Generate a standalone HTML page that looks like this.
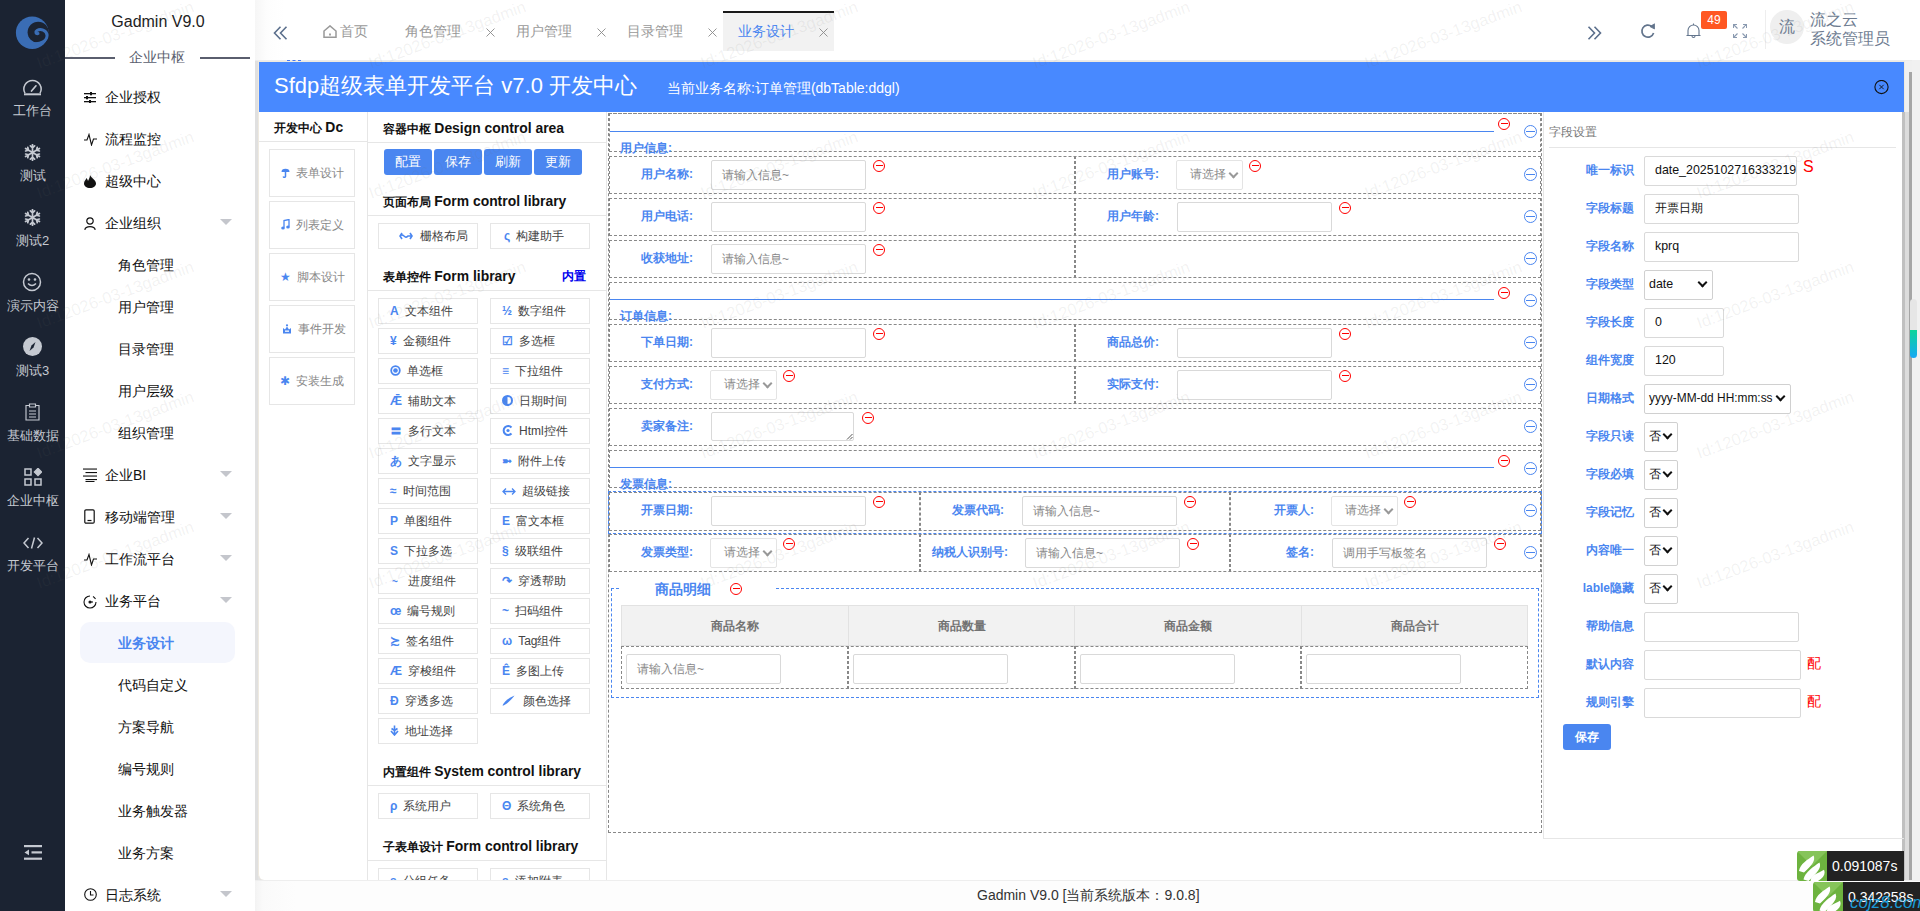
<!DOCTYPE html>
<html><head><meta charset="utf-8">
<style>
*{box-sizing:border-box;margin:0;padding:0}
html,body{width:1920px;height:911px;overflow:hidden;background:#fff;font-family:"Liberation Sans",sans-serif;position:relative}
.a{position:absolute}
#nav{left:0;top:0;width:65px;height:911px;background:#1b2332}
.ni{position:absolute;left:0;width:65px;text-align:center;color:#c5c9d1;font-size:13px;line-height:14px}
#menu{left:65px;top:0;width:190px;height:911px;background:#fff}
.mi{position:absolute;left:40px;font-size:14px;color:#111;line-height:16px;white-space:nowrap}
.ms{position:absolute;left:53px;font-size:14px;color:#111;line-height:16px;white-space:nowrap}
.arr{position:absolute;left:155px;width:0;height:0;border-left:6px solid transparent;border-right:6px solid transparent;border-top:6px solid #c4c6cc}
.tab{font-size:14px;line-height:16px;color:#999;white-space:nowrap}
.tabx{font-size:16px;line-height:18px;color:#777}
.hd{position:absolute;font-size:12px;font-weight:bold;color:#111;line-height:16px;white-space:nowrap}
.hd b{font-size:13.9px}
.hl{position:absolute;height:1px;background:#e6e6e6}
.dbox{position:absolute;left:269px;width:86px;height:48px;border:1px solid #e6e6e6;font-size:12px;color:#888;line-height:14px;white-space:nowrap}
.dbox i{font-style:normal;color:#4a86f0;display:inline-block;margin-right:6px}
.btn{position:absolute;top:149px;width:48px;height:26px;background:#4a86f0;color:#fff;font-size:13px;line-height:26px;text-align:center;border-radius:3px}
.cb{position:absolute;width:100px;height:26px;border:1px solid #e6e6e6;font-size:12px;color:#444;line-height:24px;padding-left:11px;white-space:nowrap}
.cb i{font-style:normal;color:#4a86f0;display:inline-block;margin-right:6px;font-weight:bold}
.row{position:absolute;left:609px;width:932px;border:1px dashed #888}
.vd{position:absolute;width:2px;border-left:1px dashed #888;border-right:1px dashed #888}
.lb{position:absolute;font-size:12px;font-weight:bold;color:#4a86f0;line-height:14px;white-space:nowrap}
.ti{position:absolute;font-size:12px;font-weight:bold;color:#4a86f0;line-height:14px;white-space:nowrap}
.inp{position:absolute;height:30px;border:1px solid #d9d9d9;border-radius:2px;background:#fff;font-size:12px;color:#888;line-height:28px;padding-left:10px;white-space:nowrap}
.sel{position:absolute;width:66px;height:29px;border:1px solid #e4e4e4;border-radius:2px;background:#fff;font-size:12px;color:#8a8a8a;line-height:27px;padding-left:13px;white-space:nowrap}
.rm{position:absolute;width:12px;height:12px;border:1.3px solid #f00;border-radius:50%}
.rm:after{content:"";position:absolute;left:1.5px;right:1.5px;top:4.2px;height:1.3px;background:#f00}
.bm{position:absolute;left:1524px;width:13px;height:13px;border:1.2px solid #4a86f0;border-radius:50%}
.bm:after{content:"";position:absolute;left:1px;right:1px;top:4.8px;height:1.2px;background:#4a86f0}
.rl{position:absolute;font-size:12px;font-weight:bold;color:#4a86f0;line-height:14px;white-space:nowrap;text-align:right;width:80px;left:1554px}
.ri{position:absolute;left:1644px;height:30px;border:1px solid #d9d9d9;border-radius:2px;font-size:12.4px;color:#111;line-height:27px;padding-left:10px;white-space:nowrap;overflow:hidden;background:#fff}
.rs{position:absolute;left:1644px;height:30px;border:1px solid #d0d0d0;border-radius:2px;font-size:12.4px;color:#111;line-height:27px;padding-left:4px;white-space:nowrap;background:#fff}
.chev{position:absolute;width:7px;height:7px;border-right:2px solid #111;border-bottom:2px solid #111;transform:rotate(45deg)}
</style></head><body>
<div id="nav" class="a">
  <svg class="a" style="left:10px;top:10px" width="45" height="45" viewBox="0 0 45 45">
<defs><mask id="lm"><rect width="45" height="45" fill="#fff"/><circle cx="28.2" cy="22.3" r="10.6" fill="#000"/></mask></defs>
<circle cx="22.2" cy="22.7" r="16.3" fill="#3a6db5" mask="url(#lm)"/>
<path d="M22 33.5 C31 35 37.5 30.5 37 25 C36.5 20 30.5 18.5 27 20.5 C25 21.8 25.8 24 28 23.6" fill="none" stroke="#3a6db5" stroke-width="3" stroke-linecap="round"/>
</svg>
  <!-- gauge -->
  <svg class="a" style="left:23px;top:79px" width="19" height="17" viewBox="0 0 19 17" fill="none" stroke="#c5c9d1" stroke-width="1.5">
    <path d="M2 14.2 A8.6 8.6 0 1 1 17 14.2"/><path d="M1 15.3 H18" stroke-width="2"/><path d="M8.5 12 L13 6.8" stroke-width="1.7" stroke-linecap="round"/>
  </svg>
  <div class="ni" style="top:104px">工作台</div>
  <svg class="a" style="left:24px;top:144px" width="17" height="17" viewBox="0 0 17 17" fill="none" stroke="#c5c9d1" stroke-width="1.7" stroke-linecap="round"><path d="M8.5 8.5 L8.50 0.50 M8.50 3.90 L10.62 1.78 M8.50 3.90 L6.38 1.78 M8.5 8.5 L1.57 4.50 M4.52 6.20 L3.74 3.30 M4.52 6.20 L1.62 6.98 M8.5 8.5 L1.57 12.50 M4.52 10.80 L1.62 10.02 M4.52 10.80 L3.74 13.70 M8.5 8.5 L8.50 16.50 M8.50 13.10 L6.38 15.22 M8.50 13.10 L10.62 15.22 M8.5 8.5 L15.43 12.50 M12.48 10.80 L13.26 13.70 M12.48 10.80 L15.38 10.02 M8.5 8.5 L15.43 4.50 M12.48 6.20 L15.38 6.98 M12.48 6.20 L13.26 3.30"/></svg>
  <div class="ni" style="top:169px">测试</div>
  <svg class="a" style="left:24px;top:209px" width="17" height="17" viewBox="0 0 17 17" fill="none" stroke="#c5c9d1" stroke-width="1.7" stroke-linecap="round"><path d="M8.5 8.5 L8.50 0.50 M8.50 3.90 L10.62 1.78 M8.50 3.90 L6.38 1.78 M8.5 8.5 L1.57 4.50 M4.52 6.20 L3.74 3.30 M4.52 6.20 L1.62 6.98 M8.5 8.5 L1.57 12.50 M4.52 10.80 L1.62 10.02 M4.52 10.80 L3.74 13.70 M8.5 8.5 L8.50 16.50 M8.50 13.10 L6.38 15.22 M8.50 13.10 L10.62 15.22 M8.5 8.5 L15.43 12.50 M12.48 10.80 L13.26 13.70 M12.48 10.80 L15.38 10.02 M8.5 8.5 L15.43 4.50 M12.48 6.20 L15.38 6.98 M12.48 6.20 L13.26 3.30"/></svg>
  <div class="ni" style="top:234px">测试2</div>
  <svg class="a" style="left:22px;top:272px" width="20" height="20" viewBox="0 0 20 20" fill="none" stroke="#c5c9d1" stroke-width="1.5">
    <circle cx="10" cy="10" r="8.5"/><path d="M6 11.5 Q10 15.5 14 11.5"/><circle cx="7" cy="7.5" r=".6" fill="#c5c9d1"/><circle cx="13" cy="7.5" r=".6" fill="#c5c9d1"/>
  </svg>
  <div class="ni" style="top:299px">演示内容</div>
  <svg class="a" style="left:23px;top:337px" width="19" height="19" viewBox="0 0 19 19">
    <circle cx="9.5" cy="9.5" r="9.5" fill="#c5c9d1"/><path d="M12.5 5 L10.5 10.5 L6.5 14 L8.5 8.5Z" fill="#1b2332"/>
  </svg>
  <div class="ni" style="top:364px">测试3</div>
  <svg class="a" style="left:25px;top:403px" width="15" height="18" viewBox="0 0 15 18" fill="none" stroke="#c5c9d1" stroke-width="1.15">
    <path d="M4.5 2.5 H1 V17 H14 V2.5 H10.5"/><path d="M4.5 1 H10.5 V4 H4.5Z"/><path d="M4 8 H11 M4 11 H11 M4 14 H11"/>
  </svg>
  <div class="ni" style="top:429px">基础数据</div>
  <svg class="a" style="left:24px;top:468px" width="18" height="18" viewBox="0 0 18 18" fill="none" stroke="#c5c9d1" stroke-width="1.5">
    <rect x="1" y="1" width="6" height="6"/><rect x="1" y="11" width="6" height="6"/><rect x="11" y="11" width="6" height="6"/><path d="M14 0.5 L17.5 4 L14 7.5 L10.5 4Z" fill="#c5c9d1"/>
  </svg>
  <div class="ni" style="top:494px">企业中枢</div>
  <svg class="a" style="left:23px;top:537px" width="20" height="12" viewBox="0 0 20 12" fill="none" stroke="#c5c9d1" stroke-width="1.5"><path d="M5.5 1 L1 6 L5.5 11 M14.5 1 L19 6 L14.5 11 M11.5 0.5 L8.5 11.5"/></svg>
  <div class="ni" style="top:559px">开发平台</div>
  <svg class="a" style="left:23.5px;top:845px" width="18" height="15" viewBox="0 0 18 15" fill="#c5c9d1">
    <rect x="0" y="0" width="18" height="2.2"/><rect x="7.5" y="6.3" width="10.5" height="2.2"/><rect x="0" y="12.6" width="18" height="2.2"/><path d="M0.5 7.4 L5 4.5 V10.3Z"/>
  </svg>
</div>

<div id="menu" class="a">
  <div class="a" style="left:-2px;width:190px;top:12px;text-align:center;font-size:16px;line-height:20px;color:#222">Gadmin V9.0</div>
  <div class="a" style="left:0;top:57px;width:50px;height:1.5px;background:#5a5e6e"></div>
  <div class="a" style="left:135px;top:57px;width:50px;height:1.5px;background:#5a5e6e"></div>
  <div class="a" style="left:64px;top:49px;font-size:14px;line-height:16px;color:#5a5e6e">企业中枢</div>

  <svg class="a" style="left:19px;top:92px" width="12" height="11" viewBox="0 0 12 11" fill="#111"><rect x="0" y="1" width="12" height="1.3"/><rect x="0" y="5" width="12" height="1.3"/><rect x="0" y="9" width="12" height="1.3"/><rect x="6" y="0" width="2" height="3.3"/><rect x="2" y="4" width="2" height="3.3"/><rect x="5" y="8" width="2" height="3.3"/></svg>
  <div class="mi" style="top:89px">企业授权</div>
  <svg class="a" style="left:19px;top:133px" width="13" height="13" viewBox="0 0 13 13" fill="none" stroke="#111" stroke-width="1.1"><path d="M0 7 H3 L5 1.5 L7.5 12 L9.5 6 H13"/></svg>
  <div class="mi" style="top:131px">流程监控</div>
  <svg class="a" style="left:19px;top:175px" width="12" height="13" viewBox="0 0 12 13" fill="#111"><path d="M6 0 C7 3 12 5 12 8.5 C12 11 9.5 13 6 13 C2.5 13 0 11 0 8.5 C0 6 2 4.5 2.5 3 C3.5 4.5 4 5.5 4 6 C5 4 6 2 6 0Z"/></svg>
  <div class="mi" style="top:173px">超级中心</div>
  <svg class="a" style="left:19px;top:217px" width="12" height="13" viewBox="0 0 12 13" fill="none" stroke="#111" stroke-width="1.2"><circle cx="6" cy="4" r="3.2"/><path d="M0.8 12.8 C1.5 8.5 10.5 8.5 11.2 12.8"/></svg>
  <div class="mi" style="top:215px">企业组织</div>
  <div class="arr" style="top:219px"></div>
  <div class="ms" style="top:257px">角色管理</div>
  <div class="ms" style="top:299px">用户管理</div>
  <div class="ms" style="top:341px">目录管理</div>
  <div class="ms" style="top:383px">用户层级</div>
  <div class="ms" style="top:425px">组织管理</div>
  <svg class="a" style="left:18px;top:468px" width="14" height="14" viewBox="0 0 14 14" fill="#111"><rect x="0" y="0.5" width="14" height="1.1"/><rect x="2.5" y="4" width="11.5" height="1.1"/><rect x="0" y="7.5" width="14" height="1.1"/><rect x="2.5" y="11" width="11.5" height="1.1"/><rect x="2.5" y="13" width="9" height="1"/></svg>
  <div class="mi" style="top:467px">企业BI</div>
  <div class="arr" style="top:471px"></div>
  <svg class="a" style="left:19px;top:509px" width="11" height="15" viewBox="0 0 11 15" fill="none" stroke="#111" stroke-width="1.2"><rect x="0.8" y="0.8" width="9.4" height="13.4" rx="1.2"/><path d="M3.5 11.5 H7.5"/></svg>
  <div class="mi" style="top:509px">移动端管理</div>
  <div class="arr" style="top:513px"></div>
  <svg class="a" style="left:19px;top:553px" width="13" height="13" viewBox="0 0 13 13" fill="none" stroke="#111" stroke-width="1.1"><path d="M0 7 H3 L5 1.5 L7.5 12 L9.5 6 H13"/></svg>
  <div class="mi" style="top:551px">工作流平台</div>
  <div class="arr" style="top:555px"></div>
  <svg class="a" style="left:18px;top:595px" width="14" height="14" viewBox="0 0 14 14" fill="none" stroke="#111" stroke-width="1.1"><path d="M7 1 A6 6 0 1 0 13 7" /><path d="M10 1.5 A6 6 0 0 1 12.5 4"/><circle cx="7" cy="7" r="1" fill="#111"/><path d="M7 7 H10"/></svg>
  <div class="mi" style="top:593px">业务平台</div>
  <div class="arr" style="top:597px"></div>
  <div class="a" style="left:15px;top:622px;width:155px;height:41px;border-radius:10px;background:#f4f6fd"></div>
  <div class="ms" style="top:635px;color:#4a86f0;font-weight:bold">业务设计</div>
  <div class="ms" style="top:677px">代码自定义</div>
  <div class="ms" style="top:719px">方案导航</div>
  <div class="ms" style="top:761px">编号规则</div>
  <div class="ms" style="top:803px">业务触发器</div>
  <div class="ms" style="top:845px">业务方案</div>
  <svg class="a" style="left:19px;top:888px" width="13" height="13" viewBox="0 0 13 13" fill="none" stroke="#111" stroke-width="1.1"><circle cx="6.5" cy="6.5" r="5.8"/><path d="M6.5 3 V7 H9.5"/></svg>
  <div class="mi" style="top:887px">日志系统</div>
  <div class="arr" style="top:891px"></div>
</div>

<!-- top bar -->
<div class="a" style="left:255px;top:0;width:1665px;height:60px;background:linear-gradient(90deg,#f6f6f6,#fdfdfd 12px,#fff 30px)"></div>
<svg class="a" style="left:273px;top:26px" width="15" height="14" viewBox="0 0 15 14" fill="none" stroke="#5b6f8c" stroke-width="1.6"><path d="M7.5 0.8 L1.5 7 L7.5 13.2 M13.5 0.8 L7.5 7 L13.5 13.2"/></svg>
<svg class="a" style="left:323px;top:25px" width="14" height="13" viewBox="0 0 14 13" fill="none" stroke="#999" stroke-width="1.5"><path d="M1 6 L7 0.9 L13 6 V12.2 H1Z"/><path d="M7 8.5 V10.5" stroke-width="1.8"/></svg>
<div class="a tab" style="left:340px;top:23px">首页</div>
<div class="a tab" style="left:405px;top:23px">角色管理</div>
<svg class="a" style="left:486px;top:28px" width="9" height="9" viewBox="0 0 9 9" stroke="#8a8a8a" stroke-width="0.9"><path d="M0.5 0.5 L8.5 8.5 M8.5 0.5 L0.5 8.5"/></svg>
<div class="a tab" style="left:516px;top:23px">用户管理</div>
<svg class="a" style="left:597px;top:28px" width="9" height="9" viewBox="0 0 9 9" stroke="#8a8a8a" stroke-width="0.9"><path d="M0.5 0.5 L8.5 8.5 M8.5 0.5 L0.5 8.5"/></svg>
<div class="a tab" style="left:627px;top:23px">目录管理</div>
<svg class="a" style="left:708px;top:28px" width="9" height="9" viewBox="0 0 9 9" stroke="#8a8a8a" stroke-width="0.9"><path d="M0.5 0.5 L8.5 8.5 M8.5 0.5 L0.5 8.5"/></svg>
<div class="a" style="left:723px;top:11px;width:111px;height:40px;background:#f2f2f2;border-top:2px solid #1a1a1a"></div>
<div class="a tab" style="left:738px;top:23px;color:#4a86f0">业务设计</div>
<svg class="a" style="left:819px;top:28px" width="9" height="9" viewBox="0 0 9 9" stroke="#8a8a8a" stroke-width="0.9"><path d="M0.5 0.5 L8.5 8.5 M8.5 0.5 L0.5 8.5"/></svg>
<svg class="a" style="left:1587px;top:26px" width="15" height="14" viewBox="0 0 15 14" fill="none" stroke="#5b6f8c" stroke-width="1.6"><path d="M1.5 0.8 L7.5 7 L1.5 13.2 M7.5 0.8 L13.5 7 L7.5 13.2"/></svg>
<svg class="a" style="left:1640px;top:23px" width="16" height="16" viewBox="0 0 16 16" fill="none" stroke="#62748c" stroke-width="1.7"><path d="M13.6 10 A6 6 0 1 1 11.8 3.6"/><path d="M10 3.6 L14.5 0.8 L14.5 6Z" fill="#62748c" stroke-width="0.8"/></svg>
<svg class="a" style="left:1686px;top:23px" width="15" height="16" viewBox="0 0 15 16" fill="none" stroke="#62748c" stroke-width="1.1"><path d="M7.5 0.5 V2"/><path d="M2 12.5 V7.5 A5.5 5.5 0 0 1 13 7.5 V12.5 H14.5 H0.5Z"/><path d="M6 13 A1.5 1.5 0 0 0 9 13"/></svg>
<div class="a" style="left:1701px;top:11px;width:26px;height:18px;background:#ff5722;border-radius:2px;color:#fff;font-size:12px;line-height:18px;text-align:center">49</div>
<svg class="a" style="left:1733px;top:24px" width="14" height="14" viewBox="0 0 14 14" fill="none" stroke="#8a9ab0" stroke-width="1.1"><path d="M0.5 4 V0.5 H4 M0.5 0.5 L4.5 4.5 M10 0.5 H13.5 V4 M13.5 0.5 L9.5 4.5 M0.5 10 V13.5 H4 M0.5 13.5 L4.5 9.5 M13.5 10 V13.5 H10 M13.5 13.5 L9.5 9.5"/></svg>
<div class="a" style="left:1765px;top:10px;width:1px;height:39px;background:#eee"></div>
<div class="a" style="left:1770px;top:10px;width:34px;height:34px;border-radius:50%;background:#efefef;color:#6d7b90;font-size:16px;line-height:34px;text-align:center">流</div>
<div class="a" style="left:1810px;top:10px;font-size:16px;line-height:19px;color:#6d7b90">流之云<br>系统管理员</div>

<!-- content frame -->
<div class="a" style="left:255px;top:60px;width:1665px;height:820px;background:#f0f0f0"></div>
<div class="a" style="left:255px;top:61px;width:3px;height:819px;background:#e0e0e0"></div><div class="a" style="left:258px;top:870px;width:8px;height:11px;background:#e4e4e4"></div>
<div class="a" style="left:255px;top:60px;width:1665px;height:1px;background:#ececec"></div><div class="a" style="left:258px;top:61px;width:1646px;height:819px;background:#fff;border-left:1px solid #efeae0;border-top:1px solid #efeae0;border-bottom-left-radius:6px"></div>
<div class="a" style="left:287px;top:60px;width:14px;height:1px;border-top:1px dashed #4a7af0"></div>
<div class="a" style="left:259px;top:62px;width:1645px;height:50px;background:#4889ff"></div>
<div class="a" style="left:274px;top:72px;font-size:22px;line-height:28px;color:#fff">Sfdp超级表单开发平台 v7.0 开发中心</div>
<div class="a" style="left:667px;top:80px;font-size:14px;line-height:17px;color:#fff">当前业务名称:订单管理(dbTable:ddgl)</div>
<svg class="a" style="left:1874px;top:80px" width="15" height="15" viewBox="0 0 15 15" fill="none" stroke="#111" stroke-width="1.1"><circle cx="7.5" cy="7" r="6.6"/><path d="M5.3 4.8 L9.7 9.2 M9.7 4.8 L5.3 9.2" stroke-width="0.9"/></svg>
<!-- right scrollbars -->
<div class="a" style="left:1904px;top:61px;width:1px;height:51px;background:#efeae0"></div><div class="a" style="left:1905px;top:112px;width:4px;height:768px;background:#dcdcdc"></div><div class="a" style="left:1902px;top:112px;width:3px;height:768px;background:#c0c0c0"></div><div class="a" style="left:1909px;top:72px;width:3px;height:808px;background:#a6a6a6"></div>
<div class="a" style="left:1912px;top:60px;width:8px;height:820px;background:#f1f1f1"></div>
<div class="a" style="left:1910px;top:299px;width:7px;height:32px;border-radius:4px 4px 0 0;background:#e6e6e6"></div><div class="a" style="left:1910px;top:330px;width:7px;height:28px;border-radius:0 0 4px 4px;background:linear-gradient(#0bd59a,#17a8f5)"></div>
<!-- footer -->
<div class="a" style="left:255px;top:880px;width:1665px;height:31px;background:linear-gradient(90deg,#f3f3f3,#fafafa 8px,#fdfdfd 40px);border-top:1px solid #eee"></div>
<div class="a" style="left:977px;top:887px;font-size:14px;line-height:17px;color:#333">Gadmin V9.0 [当前系统版本：9.0.8]</div>

<div class="hd" style="left:274px;top:119px">开发中心 <b>Dc</b></div>
<div class="hl" style="left:259px;top:141px;width:108px"></div>
<div class="a" style="left:367px;top:112px;width:1px;height:768px;background:#e6e6e6"></div>
<div class="dbox" style="top:149px;padding:16px 0 0 10px"><i><svg width="9" height="10" viewBox="0 0 9 10" style="vertical-align:-1px;margin-left:1px"><path d="M0.5 4 A4 3.2 0 0 1 8.5 4Z" fill="#4a86f0"/><path d="M4.5 3.5 V8.5 A1.2 1.2 0 0 1 2.2 8.5" fill="none" stroke="#4a86f0" stroke-width="1.5"/></svg></i>表单设计</div>
<div class="dbox" style="top:201px;padding:16px 0 0 10px"><i><svg width="9" height="11" viewBox="0 0 9 11" style="vertical-align:-1px;margin-left:1px"><path d="M3 8.5 V1.5 L8 0.5 V7.5" fill="none" stroke="#4a86f0" stroke-width="1.3"/><ellipse cx="2" cy="9" rx="1.8" ry="1.5" fill="#4a86f0"/><ellipse cx="7" cy="8" rx="1.8" ry="1.5" fill="#4a86f0"/></svg></i>列表定义</div>
<div class="dbox" style="top:253px;padding:16px 0 0 10px"><i>★</i>脚本设计</div>
<div class="dbox" style="top:305px;padding:16px 0 0 10px"><i><svg width="10" height="10" viewBox="0 0 10 10" style="vertical-align:-1px;margin-left:2px"><path d="M1 9.5 V4 L3 5.5 L5 2.5 L7 5.5 L9 4 V9.5Z" fill="#4a86f0"/><circle cx="5" cy="1.3" r="1.1" fill="#4a86f0"/><rect x="3" y="6.5" width="4" height="1.3" fill="#fff"/></svg></i>事件开发</div>
<div class="dbox" style="top:357px;padding:16px 0 0 10px"><i>✱</i>安装生成</div>
<div class="hd" style="left:383px;top:120px">容器中枢 <b>Design control area</b></div>
<div class="hl" style="left:368px;top:142px;width:238px"></div>
<div class="btn" style="left:384px">配置</div>
<div class="btn" style="left:434px">保存</div>
<div class="btn" style="left:484px">刷新</div>
<div class="btn" style="left:534px">更新</div>
<div class="hd" style="left:383px;top:193px">页面布局 <b>Form control library</b></div>
<div class="hl" style="left:368px;top:215px;width:238px"></div>
<div class="cb" style="left:378px;top:223px;padding-left:20px"><i style="display:inline-block;width:14px;margin-right:7px"><svg width="14" height="8" viewBox="0 0 14 8" fill="none" stroke="#4a86f0" stroke-width="1.6"><path d="M3 1 L1 4 L3 7 M11 1 L13 4 L11 7 M1 4 C4 0 6 8 9 4 L13 4"/></svg></i>栅格布局</div>
<div class="cb" style="left:490px;top:223px;padding-left:13px"><i>ς</i>构建助手</div>
<div class="hd" style="left:383px;top:268px">表单控件 <b>Form library</b></div>
<div class="a" style="left:562px;top:268px;font-size:12px;font-weight:bold;color:#0000ee;line-height:16px">内置</div>
<div class="hl" style="left:368px;top:290px;width:238px"></div>
<div class="cb" style="left:378px;top:298px"><i>A</i>文本组件</div>
<div class="cb" style="left:490px;top:298px"><i>½</i>数字组件</div>
<div class="cb" style="left:378px;top:328px"><i>¥</i>金额组件</div>
<div class="cb" style="left:490px;top:328px"><i>☑</i>多选框</div>
<div class="cb" style="left:378px;top:358px"><i><svg width="11" height="11" viewBox="0 0 11 11" style="vertical-align:-1px"><circle cx="5.5" cy="5.5" r="4.3" fill="none" stroke="#4a86f0" stroke-width="1.8"/><circle cx="5.5" cy="5.5" r="2.3" fill="#4a86f0"/></svg></i>单选框</div>
<div class="cb" style="left:490px;top:358px"><i>≡</i>下拉组件</div>
<div class="cb" style="left:378px;top:388px"><i>Ǣ</i>辅助文本</div>
<div class="cb" style="left:490px;top:388px"><i><svg width="11" height="11" viewBox="0 0 11 11" style="vertical-align:-1px"><circle cx="5.5" cy="5.5" r="4.5" fill="none" stroke="#4a86f0" stroke-width="2"/><path d="M5.5 1 A4.5 4.5 0 0 0 5.5 10Z" fill="#4a86f0"/></svg></i>日期时间</div>
<div class="cb" style="left:378px;top:418px"><i>〓</i>多行文本</div>
<div class="cb" style="left:490px;top:418px"><i><svg width="11" height="11" viewBox="0 0 11 11" style="vertical-align:-1px"><path d="M9.5 2.5 A4.5 4.5 0 1 0 9.5 8.5" fill="none" stroke="#4a86f0" stroke-width="2"/><circle cx="6" cy="5.5" r="1.6" fill="#4a86f0"/></svg></i>Html控件</div>
<div class="cb" style="left:378px;top:448px"><i>あ</i>文字显示</div>
<div class="cb" style="left:490px;top:448px"><i>➼</i>附件上传</div>
<div class="cb" style="left:378px;top:478px"><i>≈</i>时间范围</div>
<div class="cb" style="left:490px;top:478px"><i><svg width="14" height="9" viewBox="0 0 14 9" style="vertical-align:-1px"><path d="M1 4.5 H13 M4 1.5 L1 4.5 L4 7.5 M10 1.5 L13 4.5 L10 7.5" fill="none" stroke="#4a86f0" stroke-width="1.3"/></svg></i>超级链接</div>
<div class="cb" style="left:378px;top:508px"><i>P</i>单图组件</div>
<div class="cb" style="left:490px;top:508px"><i>E</i>富文本框</div>
<div class="cb" style="left:378px;top:538px"><i>S</i>下拉多选</div>
<div class="cb" style="left:490px;top:538px"><i>§</i>级联组件</div>
<div class="cb" style="left:378px;top:568px"><i><span style="font-size:10px;margin-left:2px;margin-right:4px">~</span></i>进度组件</div>
<div class="cb" style="left:490px;top:568px"><i>↷</i>穿透帮助</div>
<div class="cb" style="left:378px;top:598px"><i>œ</i>编号规则</div>
<div class="cb" style="left:490px;top:598px"><i>~</i>扫码组件</div>
<div class="cb" style="left:378px;top:628px"><i>≿</i>签名组件</div>
<div class="cb" style="left:490px;top:628px"><i>ω</i>Tag组件</div>
<div class="cb" style="left:378px;top:658px"><i>Æ</i>穿梭组件</div>
<div class="cb" style="left:490px;top:658px"><i>Ê</i>多图上传</div>
<div class="cb" style="left:378px;top:688px"><i>Đ</i>穿透多选</div>
<div class="cb" style="left:490px;top:688px"><i><svg width="13" height="11" viewBox="0 0 13 11" style="vertical-align:-1px;margin-right:2px"><path d="M0.5 10.5 C2 7 6 3 12.5 0.5 C10 4 6 8 1.5 10.5Z" fill="#4a86f0"/></svg></i>颜色选择</div>
<div class="cb" style="left:378px;top:718px"><i><svg width="9" height="11" viewBox="0 0 9 11" style="vertical-align:-1px"><path d="M4.5 0.5 V9.5 M1 6 L4.5 10 L8 6 M1.5 3.5 L4.5 5.5 L7.5 3.5" fill="none" stroke="#4a86f0" stroke-width="1.6"/></svg></i>地址选择</div>
<div class="hd" style="left:383px;top:763px">内置组件 <b>System control library</b></div>
<div class="hl" style="left:368px;top:785px;width:238px"></div>
<div class="cb" style="left:378px;top:793px"><i>ρ</i>系统用户</div>
<div class="cb" style="left:490px;top:793px"><i>Θ</i>系统角色</div>
<div class="hd" style="left:383px;top:838px">子表单设计 <b>Form control library</b></div>
<div class="hl" style="left:368px;top:860px;width:238px"></div>
<div class="a" style="left:368px;top:861px;width:238px;height:19px;overflow:hidden"><div class="cb" style="left:10px;top:7px"><i>ʂ</i>分组任务</div><div class="cb" style="left:122px;top:7px"><i>ʂ</i>添加附表</div></div>
<div class="a" style="left:606px;top:112px;width:1px;height:768px;background:#e6e6e6"></div>
<div class="a" style="left:608px;top:113px;width:934px;height:720px;border:1px dashed #888"></div>
<div class="row" style="top:113px;height:39px"></div>
<div class="a" style="left:610px;top:131px;width:884px;height:1px;background:#4a86f0"></div>
<div class="ti" style="left:620px;top:141px;background:transparent">用户信息:</div>
<div class="rm" style="left:1498px;top:118px"></div>
<div class="bm" style="top:125px"></div>
<div class="row" style="top:156px;height:38px"></div>
<div class="vd" style="left:1074px;top:156px;height:38px"></div>
<div class="bm" style="top:168px"></div>
<div class="lb" style="left:609px;width:84px;text-align:right;top:167px">用户名称:</div>
<div class="inp" style="left:711px;top:160px;width:155px">请输入信息~</div>
<div class="rm" style="left:873px;top:160px"></div>
<div class="lb" style="left:1075px;width:84px;text-align:right;top:167px">用户账号:</div>
<div class="sel" style="left:1176px;top:160px;height:30px;width:67px">请选择</div>
<div class="chev" style="left:1230px;top:170px;border-color:#999;width:7px;height:7px;border-width:0 2px 2px 0"></div>
<div class="rm" style="left:1249px;top:160px"></div>
<div class="row" style="top:198px;height:38px"></div>
<div class="vd" style="left:1074px;top:198px;height:38px"></div>
<div class="bm" style="top:210px"></div>
<div class="lb" style="left:609px;width:84px;text-align:right;top:209px">用户电话:</div>
<div class="inp" style="left:711px;top:202px;width:155px"></div>
<div class="rm" style="left:873px;top:202px"></div>
<div class="lb" style="left:1075px;width:84px;text-align:right;top:209px">用户年龄:</div>
<div class="inp" style="left:1177px;top:202px;width:155px"></div>
<div class="rm" style="left:1339px;top:202px"></div>
<div class="row" style="top:240px;height:38px"></div>
<div class="vd" style="left:1074px;top:240px;height:38px"></div>
<div class="bm" style="top:252px"></div>
<div class="lb" style="left:609px;width:84px;text-align:right;top:251px">收获地址:</div>
<div class="inp" style="left:711px;top:244px;width:155px">请输入信息~</div>
<div class="rm" style="left:873px;top:244px"></div>
<div class="row" style="top:282px;height:38px"></div>
<div class="a" style="left:610px;top:299px;width:884px;height:1px;background:#4a86f0"></div>
<div class="ti" style="left:620px;top:309px;background:transparent">订单信息:</div>
<div class="rm" style="left:1498px;top:287px"></div>
<div class="bm" style="top:294px"></div>
<div class="row" style="top:324px;height:38px"></div>
<div class="vd" style="left:1074px;top:324px;height:38px"></div>
<div class="bm" style="top:336px"></div>
<div class="lb" style="left:609px;width:84px;text-align:right;top:335px">下单日期:</div>
<div class="inp" style="left:711px;top:328px;width:155px"></div>
<div class="rm" style="left:873px;top:328px"></div>
<div class="lb" style="left:1075px;width:84px;text-align:right;top:335px">商品总价:</div>
<div class="inp" style="left:1177px;top:328px;width:155px"></div>
<div class="rm" style="left:1339px;top:328px"></div>
<div class="row" style="top:366px;height:38px"></div>
<div class="vd" style="left:1074px;top:366px;height:38px"></div>
<div class="bm" style="top:378px"></div>
<div class="lb" style="left:609px;width:84px;text-align:right;top:377px">支付方式:</div>
<div class="sel" style="left:710px;top:370px;height:30px;width:67px">请选择</div>
<div class="chev" style="left:764px;top:380px;border-color:#999;width:7px;height:7px;border-width:0 2px 2px 0"></div>
<div class="rm" style="left:783px;top:370px"></div>
<div class="lb" style="left:1075px;width:84px;text-align:right;top:377px">实际支付:</div>
<div class="inp" style="left:1177px;top:370px;width:155px"></div>
<div class="rm" style="left:1339px;top:370px"></div>
<div class="row" style="top:408px;height:38px"></div>
<div class="bm" style="top:420px"></div>
<div class="lb" style="left:609px;width:84px;text-align:right;top:419px">卖家备注:</div>
<div class="inp" style="left:711px;top:412px;width:143px;height:29px"></div>
<svg class="a" style="left:846px;top:433px" width="7" height="7" viewBox="0 0 7 7" stroke="#555" stroke-width="1"><path d="M1 6.5 L6.5 1 M4 6.5 L6.5 4"/></svg>
<div class="rm" style="left:862px;top:412px"></div>
<div class="row" style="top:450px;height:38px"></div>
<div class="a" style="left:610px;top:467px;width:884px;height:1px;background:#4a86f0"></div>
<div class="ti" style="left:620px;top:477px;background:transparent">发票信息:</div>
<div class="rm" style="left:1498px;top:455px"></div>
<div class="bm" style="top:462px"></div>
<div class="a" style="left:608px;top:491px;width:934px;height:43px;border:1.5px dashed #4a86f0"></div>
<div class="row" style="top:492px;height:39px"></div>
<div class="vd" style="left:919px;top:492px;height:39px"></div>
<div class="vd" style="left:1229px;top:492px;height:39px"></div>
<div class="bm" style="top:504px"></div>
<div class="lb" style="left:609px;width:84px;text-align:right;top:503px">开票日期:</div>
<div class="inp" style="left:711px;top:496px;width:155px"></div>
<div class="rm" style="left:873px;top:496px"></div>
<div class="lb" style="left:920px;width:84px;text-align:right;top:503px">发票代码:</div>
<div class="inp" style="left:1022px;top:496px;width:155px">请输入信息~</div>
<div class="rm" style="left:1184px;top:496px"></div>
<div class="lb" style="left:1230px;width:84px;text-align:right;top:503px">开票人:</div>
<div class="sel" style="left:1331px;top:496px;height:30px;width:67px">请选择</div>
<div class="chev" style="left:1385px;top:506px;border-color:#999;width:7px;height:7px;border-width:0 2px 2px 0"></div>
<div class="rm" style="left:1404px;top:496px"></div>
<div class="row" style="top:534px;height:38px"></div>
<div class="vd" style="left:919px;top:534px;height:38px"></div>
<div class="vd" style="left:1229px;top:534px;height:38px"></div>
<div class="bm" style="top:546px"></div>
<div class="lb" style="left:609px;width:84px;text-align:right;top:545px">发票类型:</div>
<div class="sel" style="left:710px;top:538px;height:30px;width:67px">请选择</div>
<div class="chev" style="left:764px;top:548px;border-color:#999;width:7px;height:7px;border-width:0 2px 2px 0"></div>
<div class="rm" style="left:783px;top:538px"></div>
<div class="lb" style="left:920px;width:88px;text-align:right;top:545px">纳税人识别号:</div>
<div class="inp" style="left:1025px;top:538px;width:155px">请输入信息~</div>
<div class="rm" style="left:1187px;top:538px"></div>
<div class="lb" style="left:1230px;width:84px;text-align:right;top:545px">签名:</div>
<div class="inp" style="left:1332px;top:538px;width:155px">调用手写板签名</div>
<div class="rm" style="left:1494px;top:538px"></div>
<div class="a" style="left:611px;top:588px;width:928px;height:110px;border:1px dashed #4a86f0"></div>
<div class="a" style="left:619px;top:585px;width:157px;height:6px;background:#fff"></div>
<div class="a" style="left:655px;top:581px;font-size:14px;font-weight:bold;color:#4a86f0;line-height:16px">商品明细</div>
<div class="rm" style="left:730px;top:583px"></div>
<div class="a" style="left:621px;top:605px;width:907px;height:41px;background:#f2f2f2;border:1px solid #e2e2e2"></div>
<div class="a" style="left:621px;width:227px;top:619px;text-align:center;font-size:12px;font-weight:bold;color:#727272;line-height:14px">商品名称</div>
<div class="a" style="left:848px;top:605px;width:1px;height:41px;background:#e2e2e2"></div>
<div class="a" style="left:848px;width:227px;top:619px;text-align:center;font-size:12px;font-weight:bold;color:#727272;line-height:14px">商品数量</div>
<div class="a" style="left:1074px;top:605px;width:1px;height:41px;background:#e2e2e2"></div>
<div class="a" style="left:1074px;width:227px;top:619px;text-align:center;font-size:12px;font-weight:bold;color:#727272;line-height:14px">商品金额</div>
<div class="a" style="left:1301px;top:605px;width:1px;height:41px;background:#e2e2e2"></div>
<div class="a" style="left:1301px;width:227px;top:619px;text-align:center;font-size:12px;font-weight:bold;color:#727272;line-height:14px">商品合计</div>
<div class="a" style="left:621px;top:646px;width:907px;height:43px;border:1px dashed #888"></div>
<div class="inp" style="left:626px;top:654px;width:155px;height:30px">请输入信息~</div>
<div class="vd" style="left:847px;top:646px;height:43px"></div>
<div class="inp" style="left:853px;top:654px;width:155px;height:30px"></div>
<div class="vd" style="left:1074px;top:646px;height:43px"></div>
<div class="inp" style="left:1080px;top:654px;width:155px;height:30px"></div>
<div class="vd" style="left:1300px;top:646px;height:43px"></div>
<div class="inp" style="left:1306px;top:654px;width:155px;height:30px"></div>
<div class="a" style="left:1543px;top:112px;width:361px;height:727px;border-left:1px solid #e6e6e6;border-bottom:1px solid #e6e6e6"></div>
<div class="a" style="left:1549px;top:125px;font-size:12px;color:#777;line-height:14px">字段设置</div>
<div class="hl" style="left:1549px;top:147px;width:347px"></div>
<div class="rl" style="top:163px">唯一标识</div>
<div class="ri" style="top:156px;width:153px">date_20251027163332196</div>
<div class="rl" style="top:201px">字段标题</div>
<div class="ri" style="top:194px;width:155px">开票日期</div>
<div class="rl" style="top:239px">字段名称</div>
<div class="ri" style="top:232px;width:155px">kprq</div>
<div class="rl" style="top:277px">字段类型</div>
<div class="rs" style="top:270px;width:69px;">date</div>
<div class="chev" style="left:1699px;top:279px;width:7px;height:7px;border-width:0 2.2px 2.2px 0"></div>
<div class="rl" style="top:315px">字段长度</div>
<div class="ri" style="top:308px;width:80px">0</div>
<div class="rl" style="top:353px">组件宽度</div>
<div class="ri" style="top:346px;width:80px">120</div>
<div class="rl" style="top:391px">日期格式</div>
<div class="rs" style="top:384px;width:147px;font-size:11.9px">yyyy-MM-dd HH:mm:ss</div>
<div class="chev" style="left:1777px;top:393px;width:7px;height:7px;border-width:0 2.2px 2.2px 0"></div>
<div class="rl" style="top:429px">字段只读</div>
<div class="rs" style="top:422px;width:34px;">否</div>
<div class="chev" style="left:1664px;top:431px;width:7px;height:7px;border-width:0 2.2px 2.2px 0"></div>
<div class="rl" style="top:467px">字段必填</div>
<div class="rs" style="top:460px;width:34px;">否</div>
<div class="chev" style="left:1664px;top:469px;width:7px;height:7px;border-width:0 2.2px 2.2px 0"></div>
<div class="rl" style="top:505px">字段记忆</div>
<div class="rs" style="top:498px;width:34px;">否</div>
<div class="chev" style="left:1664px;top:507px;width:7px;height:7px;border-width:0 2.2px 2.2px 0"></div>
<div class="rl" style="top:543px">内容唯一</div>
<div class="rs" style="top:536px;width:34px;">否</div>
<div class="chev" style="left:1664px;top:545px;width:7px;height:7px;border-width:0 2.2px 2.2px 0"></div>
<div class="rl" style="top:581px">lable隐藏</div>
<div class="rs" style="top:574px;width:34px;">否</div>
<div class="chev" style="left:1664px;top:583px;width:7px;height:7px;border-width:0 2.2px 2.2px 0"></div>
<div class="rl" style="top:619px">帮助信息</div>
<div class="ri" style="top:612px;width:155px"></div>
<div class="rl" style="top:657px">默认内容</div>
<div class="ri" style="top:650px;width:157px"></div>
<div class="rl" style="top:695px">规则引擎</div>
<div class="ri" style="top:688px;width:157px"></div>
<div class="a" style="left:1803px;top:158px;font-size:16px;color:#f00;line-height:18px">S</div>
<div class="a" style="left:1807px;top:655px;font-size:14px;color:#f00;line-height:16px">配</div>
<div class="a" style="left:1807px;top:693px;font-size:14px;color:#f00;line-height:16px">配</div>
<div class="a" style="left:1563px;top:724px;width:48px;height:26px;background:#4a86f0;border-radius:3px;color:#fff;font-size:12px;font-weight:bold;line-height:26px;text-align:center">保存</div>
<div class="a" style="left:1797px;top:851px;width:30px;height:30px;background:#6db33f;border-radius:3px 0 0 3px;overflow:hidden"><svg width="30" height="30" viewBox="0 0 30 30"><path d="M0 0 L15 15 L30 0Z" fill="#86c45a"/><path d="M2 20 C3 13 10.600000000000001 8.5 16.6 4.5 C18.6 9.5 15.600000000000001 13.5 7 21.5Z" fill="#fff"/><path d="M6.5 28.5 C7.5 21.5 16.5 15.4 22.5 11.4 C24.5 16.4 21.5 20.4 11.5 30.0Z" fill="#fff"/><path d="M13.5 29.8 C14.5 22.8 21 22.7 27 18.7 C29 23.7 26 27.7 18.5 31.3Z" fill="#fff"/></svg></div>
<div class="a" style="left:1827px;top:851px;width:77px;height:30px;background:#222;color:#fff;font-size:14px;line-height:30px;padding-left:5px;white-space:nowrap;overflow:hidden">0.091087s</div>
<div class="a" style="left:1813px;top:882px;width:30px;height:30px;background:#6db33f;border-radius:3px 0 0 3px;overflow:hidden"><svg width="30" height="30" viewBox="0 0 30 30"><path d="M0 0 L15 15 L30 0Z" fill="#86c45a"/><path d="M2 20 C3 13 10.600000000000001 8.5 16.6 4.5 C18.6 9.5 15.600000000000001 13.5 7 21.5Z" fill="#fff"/><path d="M6.5 28.5 C7.5 21.5 16.5 15.4 22.5 11.4 C24.5 16.4 21.5 20.4 11.5 30.0Z" fill="#fff"/><path d="M13.5 29.8 C14.5 22.8 21 22.7 27 18.7 C29 23.7 26 27.7 18.5 31.3Z" fill="#fff"/></svg></div>
<div class="a" style="left:1843px;top:882px;width:77px;height:30px;background:#222;color:#fff;font-size:14px;line-height:30px;padding-left:5px;white-space:nowrap;overflow:hidden">0.342258s</div>
<div class="a" style="left:1850px;top:893px;font-size:17px;font-style:italic;color:#1b9ad6;line-height:20px">cojz8.com</div>
<div class="a" style="left:39px;top:55px;font-size:16.5px;line-height:16px;color:rgba(110,110,110,0.09);white-space:nowrap;transform-origin:0 13px;transform:rotate(-20.3deg);pointer-events:none">Id:12026-03-13gadmin</div>
<div class="a" style="left:39px;top:185px;font-size:16.5px;line-height:16px;color:rgba(110,110,110,0.09);white-space:nowrap;transform-origin:0 13px;transform:rotate(-20.3deg);pointer-events:none">Id:12026-03-13gadmin</div>
<div class="a" style="left:39px;top:315px;font-size:16.5px;line-height:16px;color:rgba(110,110,110,0.09);white-space:nowrap;transform-origin:0 13px;transform:rotate(-20.3deg);pointer-events:none">Id:12026-03-13gadmin</div>
<div class="a" style="left:39px;top:445px;font-size:16.5px;line-height:16px;color:rgba(110,110,110,0.09);white-space:nowrap;transform-origin:0 13px;transform:rotate(-20.3deg);pointer-events:none">Id:12026-03-13gadmin</div>
<div class="a" style="left:39px;top:575px;font-size:16.5px;line-height:16px;color:rgba(110,110,110,0.09);white-space:nowrap;transform-origin:0 13px;transform:rotate(-20.3deg);pointer-events:none">Id:12026-03-13gadmin</div>
<div class="a" style="left:371px;top:55px;font-size:16.5px;line-height:16px;color:rgba(110,110,110,0.09);white-space:nowrap;transform-origin:0 13px;transform:rotate(-20.3deg);pointer-events:none">Id:12026-03-13gadmin</div>
<div class="a" style="left:371px;top:185px;font-size:16.5px;line-height:16px;color:rgba(110,110,110,0.09);white-space:nowrap;transform-origin:0 13px;transform:rotate(-20.3deg);pointer-events:none">Id:12026-03-13gadmin</div>
<div class="a" style="left:371px;top:315px;font-size:16.5px;line-height:16px;color:rgba(110,110,110,0.09);white-space:nowrap;transform-origin:0 13px;transform:rotate(-20.3deg);pointer-events:none">Id:12026-03-13gadmin</div>
<div class="a" style="left:371px;top:445px;font-size:16.5px;line-height:16px;color:rgba(110,110,110,0.09);white-space:nowrap;transform-origin:0 13px;transform:rotate(-20.3deg);pointer-events:none">Id:12026-03-13gadmin</div>
<div class="a" style="left:371px;top:575px;font-size:16.5px;line-height:16px;color:rgba(110,110,110,0.09);white-space:nowrap;transform-origin:0 13px;transform:rotate(-20.3deg);pointer-events:none">Id:12026-03-13gadmin</div>
<div class="a" style="left:703px;top:55px;font-size:16.5px;line-height:16px;color:rgba(110,110,110,0.09);white-space:nowrap;transform-origin:0 13px;transform:rotate(-20.3deg);pointer-events:none">Id:12026-03-13gadmin</div>
<div class="a" style="left:703px;top:185px;font-size:16.5px;line-height:16px;color:rgba(110,110,110,0.09);white-space:nowrap;transform-origin:0 13px;transform:rotate(-20.3deg);pointer-events:none">Id:12026-03-13gadmin</div>
<div class="a" style="left:703px;top:315px;font-size:16.5px;line-height:16px;color:rgba(110,110,110,0.09);white-space:nowrap;transform-origin:0 13px;transform:rotate(-20.3deg);pointer-events:none">Id:12026-03-13gadmin</div>
<div class="a" style="left:703px;top:445px;font-size:16.5px;line-height:16px;color:rgba(110,110,110,0.09);white-space:nowrap;transform-origin:0 13px;transform:rotate(-20.3deg);pointer-events:none">Id:12026-03-13gadmin</div>
<div class="a" style="left:703px;top:575px;font-size:16.5px;line-height:16px;color:rgba(110,110,110,0.09);white-space:nowrap;transform-origin:0 13px;transform:rotate(-20.3deg);pointer-events:none">Id:12026-03-13gadmin</div>
<div class="a" style="left:1035px;top:55px;font-size:16.5px;line-height:16px;color:rgba(110,110,110,0.09);white-space:nowrap;transform-origin:0 13px;transform:rotate(-20.3deg);pointer-events:none">Id:12026-03-13gadmin</div>
<div class="a" style="left:1035px;top:185px;font-size:16.5px;line-height:16px;color:rgba(110,110,110,0.09);white-space:nowrap;transform-origin:0 13px;transform:rotate(-20.3deg);pointer-events:none">Id:12026-03-13gadmin</div>
<div class="a" style="left:1035px;top:315px;font-size:16.5px;line-height:16px;color:rgba(110,110,110,0.09);white-space:nowrap;transform-origin:0 13px;transform:rotate(-20.3deg);pointer-events:none">Id:12026-03-13gadmin</div>
<div class="a" style="left:1035px;top:445px;font-size:16.5px;line-height:16px;color:rgba(110,110,110,0.09);white-space:nowrap;transform-origin:0 13px;transform:rotate(-20.3deg);pointer-events:none">Id:12026-03-13gadmin</div>
<div class="a" style="left:1035px;top:575px;font-size:16.5px;line-height:16px;color:rgba(110,110,110,0.09);white-space:nowrap;transform-origin:0 13px;transform:rotate(-20.3deg);pointer-events:none">Id:12026-03-13gadmin</div>
<div class="a" style="left:1367px;top:55px;font-size:16.5px;line-height:16px;color:rgba(110,110,110,0.09);white-space:nowrap;transform-origin:0 13px;transform:rotate(-20.3deg);pointer-events:none">Id:12026-03-13gadmin</div>
<div class="a" style="left:1367px;top:185px;font-size:16.5px;line-height:16px;color:rgba(110,110,110,0.09);white-space:nowrap;transform-origin:0 13px;transform:rotate(-20.3deg);pointer-events:none">Id:12026-03-13gadmin</div>
<div class="a" style="left:1367px;top:315px;font-size:16.5px;line-height:16px;color:rgba(110,110,110,0.09);white-space:nowrap;transform-origin:0 13px;transform:rotate(-20.3deg);pointer-events:none">Id:12026-03-13gadmin</div>
<div class="a" style="left:1367px;top:445px;font-size:16.5px;line-height:16px;color:rgba(110,110,110,0.09);white-space:nowrap;transform-origin:0 13px;transform:rotate(-20.3deg);pointer-events:none">Id:12026-03-13gadmin</div>
<div class="a" style="left:1367px;top:575px;font-size:16.5px;line-height:16px;color:rgba(110,110,110,0.09);white-space:nowrap;transform-origin:0 13px;transform:rotate(-20.3deg);pointer-events:none">Id:12026-03-13gadmin</div>
<div class="a" style="left:1699px;top:55px;font-size:16.5px;line-height:16px;color:rgba(110,110,110,0.09);white-space:nowrap;transform-origin:0 13px;transform:rotate(-20.3deg);pointer-events:none">Id:12026-03-13gadmin</div>
<div class="a" style="left:1699px;top:185px;font-size:16.5px;line-height:16px;color:rgba(110,110,110,0.09);white-space:nowrap;transform-origin:0 13px;transform:rotate(-20.3deg);pointer-events:none">Id:12026-03-13gadmin</div>
<div class="a" style="left:1699px;top:315px;font-size:16.5px;line-height:16px;color:rgba(110,110,110,0.09);white-space:nowrap;transform-origin:0 13px;transform:rotate(-20.3deg);pointer-events:none">Id:12026-03-13gadmin</div>
<div class="a" style="left:1699px;top:445px;font-size:16.5px;line-height:16px;color:rgba(110,110,110,0.09);white-space:nowrap;transform-origin:0 13px;transform:rotate(-20.3deg);pointer-events:none">Id:12026-03-13gadmin</div>
<div class="a" style="left:1699px;top:575px;font-size:16.5px;line-height:16px;color:rgba(110,110,110,0.09);white-space:nowrap;transform-origin:0 13px;transform:rotate(-20.3deg);pointer-events:none">Id:12026-03-13gadmin</div>
</body></html>
